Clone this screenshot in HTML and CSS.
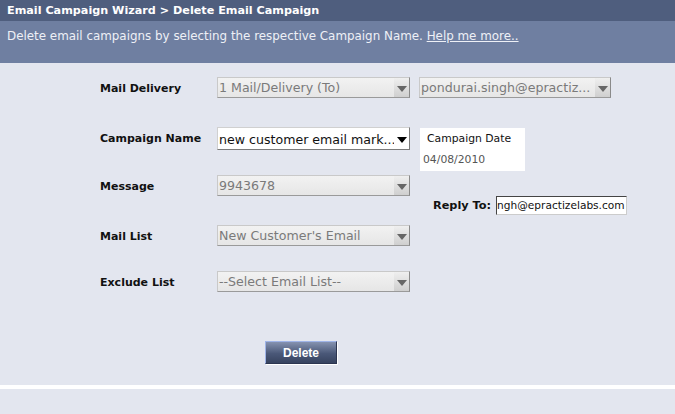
FILE: index.html
```html
<!DOCTYPE html>
<html lang="en">
<head>
    <meta charset="UTF-8">
    <title>Delete Email Campaign</title>
    <link rel="stylesheet" href="styles.css">
</head>
<body>
    <div class="title-bar">Email Campaign Wizard &gt; Delete Email Campaign</div>
    <div class="intro">
        Delete email campaigns by selecting the respective Campaign Name. <a href="#">Help me more..</a>
    </div>

    <div class="wizard">
        <form class="grid">
            <label class="lbl">Mail Delivery</label>
            <div class="select disabled"><span>1 Mail/Delivery (To)</span><i class="arrow"></i></div>
            <div class="select disabled narrow"><span>pondurai.singh@epractiz...</span><i class="arrow"></i></div>

            <label class="lbl">Campaign Name</label>
            <div class="select active"><span>new customer email mark...</span><i class="arrow"></i></div>
            <div class="date-box">
                <div class="date-title">Campaign Date</div>
                <div class="date-value">04/08/2010</div>
            </div>

            <label class="lbl">Message</label>
            <div class="select disabled"><span>9943678</span><i class="arrow"></i></div>
            <div class="reply">
                <label class="lbl">Reply To:</label>
                <div class="reply-input">ngh@epractizelabs.com</div>
            </div>

            <label class="lbl">Mail List</label>
            <div class="select disabled"><span>New Customer's Email</span><i class="arrow"></i></div>
            <div></div>

            <label class="lbl">Exclude List</label>
            <div class="select disabled"><span>--Select Email List--</span><i class="arrow"></i></div>
            <div></div>
        </form>

        <div class="actions">
            <button type="button" class="btn">Delete</button>
        </div>
    </div>
    <div class="footer"></div>
</body>
</html>
```

FILE: styles.css
```css
body {
    margin: 0;
    font-family: 'DejaVu Sans', Verdana, sans-serif;
    background-color: #e3e6ef;
    width: 675px;
    height: 414px;
    overflow: hidden;
}

.title-bar {
    height: 21px;
    line-height: 22px;
    background-color: #4f5e7e;
    color: #fff;
    font-size: 11.2px;
    font-weight: bold;
    padding-left: 7px;
}

.intro {
    height: 42px;
    padding: 8px 0 0 7px;
    box-sizing: border-box;
    background-color: #6f7fa1;
    color: #eef0f6;
    font-size: 11.9px;
}

.intro a {
    color: #eef0f6;
}

.wizard {
    height: 322px;
    padding-top: 14px;
    box-sizing: border-box;
}

.grid {
    display: grid;
    grid-template-columns: 117px 202px auto;
    grid-template-rows: 50px 48px 50px 46px 50px;
    padding-left: 100px;
    margin: 0;
}

.lbl {
    font-size: 11px;
    font-weight: bold;
    color: #111;
    padding-top: 5px;
}

.select {
    position: relative;
    width: 193px;
    height: 21px;
    box-sizing: border-box;
    border: 1px solid #c9c9c9;
    border-right-color: #8a8a8a;
    border-bottom-color: #9a9a9a;
    background: linear-gradient(#f2f2f2, #e6e6e6);
    font-size: 12.6px;
    line-height: 20px;
    padding-left: 1px;
    color: #7a7a7a;
    white-space: nowrap;
    overflow: hidden;
}

.select.narrow {
    width: 192px;
}

.select.active {
    background: #fff;
    color: #111;
    height: 23px;
    line-height: 24px;
    border-color: #d0d0d0 #7a7a7a #7a7a7a #d0d0d0;
}

.arrow {
    position: absolute;
    right: 0;
    top: 0;
    bottom: 0;
    width: 15px;
    background: linear-gradient(#efefef, #cfcfcf);
}

.arrow::after {
    content: "";
    position: absolute;
    left: 3px;
    top: 8px;
    border-left: 5px solid transparent;
    border-right: 5px solid transparent;
    border-top: 6px solid #666;
}

.select.active .arrow {
    background: #fff;
}

.select.active .arrow::after {
    border-top-color: #000;
    top: 9px;
}

.date-box {
    width: 105px;
    height: 43px;
    margin-left: 1px;
    margin-top: 1px;
    background-color: #fff;
    font-size: 10.8px;
    padding: 4px 0 0 3px;
    box-sizing: border-box;
}

.date-title {
    color: #111;
    padding-left: 4px;
}

.date-value {
    color: #555;
    margin-top: 8px;
}

.reply {
    display: flex;
    align-items: center;
    margin-top: 21px;
    margin-left: 14px;
    height: 19px;
}

.reply .lbl {
    padding-top: 0;
    margin-right: 5px;
    font-size: 11.3px;
}

.reply-input {
    width: 131px;
    height: 19px;
    box-sizing: border-box;
    border: 1px solid #444;
    border-right-color: #ccc;
    border-bottom-color: #ccc;
    background-color: #fff;
    font-size: 10.6px;
    line-height: 17px;
    color: #111;
    overflow: hidden;
    white-space: nowrap;
}

.actions {
    padding: 20px 0 0 265px;
}

.btn {
    width: 72px;
    height: 23px;
    margin: 0;
    padding: 0;
    font-family: 'Liberation Sans', Arial, sans-serif;
    font-size: 12px;
    font-weight: bold;
    color: #fff;
    background: linear-gradient(#8592b0, #4a5878 55%, #37435f);
    border: 1px solid #2c3550;
    border-top-color: #9fb4e8;
    border-left-color: #9fb4e8;
    box-shadow: 1px 1px 0 #fff;
    cursor: pointer;
}

.footer {
    height: 4px;
    background-color: #fff;
}
```
